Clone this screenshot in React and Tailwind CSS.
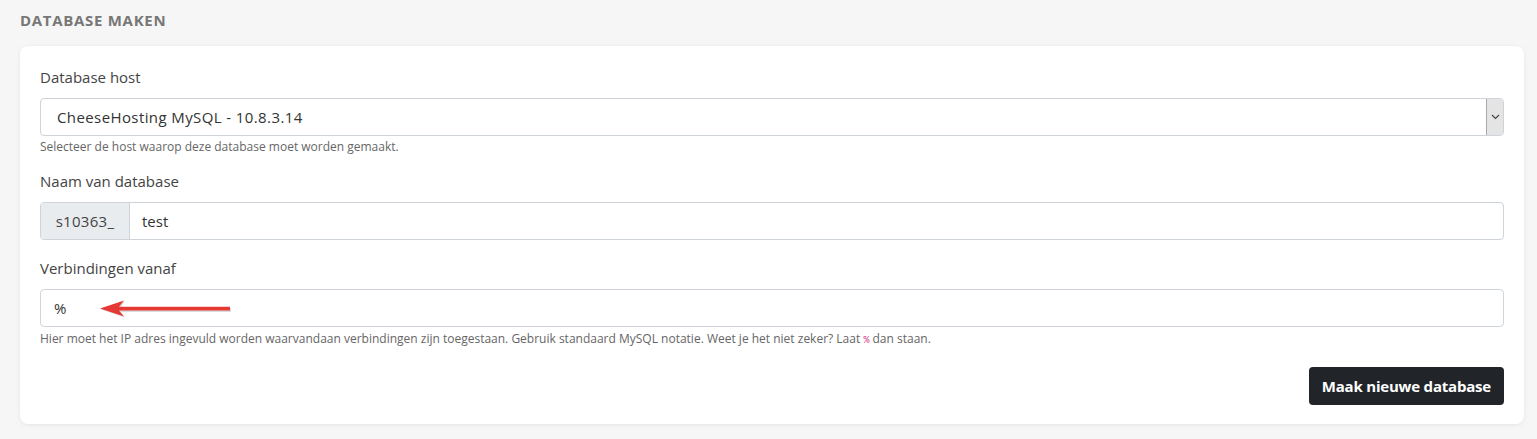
import React from "react";

const font = { fontFamily: "'Open Sans', Lato, sans-serif" };

function Field({ label, children, help, helpGap = "mt-[2px]" }) {
  return (
    <div className="flex flex-col">
      <label className="text-[15px] text-[#444] leading-[22px] mb-[10px]">{label}</label>
      {children}
      {help && <p className={`text-[12px] text-[#666] leading-[18px] ${helpGap}`}>{help}</p>}
    </div>
  );
}

export default function App() {
  return (
    <div className="min-h-[439px] bg-[#f6f6f6] px-[20px] pt-[10px] pb-[15px]" style={font}>
      <h2 className="text-[15px] font-bold text-[#777] tracking-[0.7px] leading-[20px] mb-[16px]">DATABASE MAKEN</h2>

      <div className="bg-white rounded-[8px] shadow-[0_1px_4px_rgba(0,0,0,0.08)] px-[20px] pt-[20px] pb-[19px] w-[1504px]">
        <Field label="Database host" help="Selecteer de host waarop deze database moet worden gemaakt.">
          <div className="flex h-[38px] border border-[#ced4da] rounded-[4px] overflow-hidden">
            <div className="flex-1 flex items-center pl-[16px] text-[15px] tracking-[0.4px] text-[#333]">
              CheeseHosting MySQL - 10.8.3.14
            </div>
            <div className="w-[17px] bg-[#e4e4e4] border-l border-[#aaa] flex items-center justify-center">
              <svg width="9" height="6" viewBox="0 0 9 6">
                <path d="M1 1l3.5 3.5L8 1" fill="none" stroke="#444" strokeWidth="1.2" />
              </svg>
            </div>
          </div>
        </Field>

        <div className="mt-[14px]">
          <Field label="Naam van database">
            <div className="flex h-[38px] border border-[#ced4da] rounded-[4px] overflow-hidden">
              <div className="w-[89px] bg-[#e9ecef] border-r border-[#ced4da] flex items-center justify-center text-[15px] tracking-[0.3px] text-[#444]">
                s10363_
              </div>
              <div className="flex-1 flex items-center pl-[12px] text-[15px] text-[#333]">test</div>
            </div>
          </Field>
        </div>

        <div className="mt-[17px]">
          <Field
            label="Verbindingen vanaf"
            helpGap="mt-[3px]"
            help={
              <>
                Hier moet het IP adres ingevuld worden waarvandaan verbindingen zijn toegestaan. Gebruik standaard MySQL
                notatie. Weet je het niet zeker? Laat{" "}
                <code className="text-[#d63384] text-[10px] font-mono">%</code> dan staan.
              </>
            }
          >
            <div className="relative flex h-[38px] border border-[#ced4da] rounded-[4px] items-center pl-[13px] text-[15px] text-[#333]">
              %
              <svg className="absolute left-[56px] top-[9px]" width="136" height="20" viewBox="0 0 136 20">
                <path d="M3 9.5 L27 1.5 L22 8 L133 8 L133 12 L22 12 L27 17.5 Z" fill="#888" opacity="0.3" transform="translate(1,1)" />
                <path d="M3 9.5 L27 1.5 L22 7.8 L133 7.8 L133 11.6 L22 11.6 L27 17.5 Z" fill="#e53935" />
              </svg>
            </div>
          </Field>
        </div>

        <div className="flex justify-end mt-[17px]">
          <button className="h-[38px] px-[13px] bg-[#212529] text-white text-[15px] font-bold tracking-[-0.2px] rounded-[4px]">
            Maak nieuwe database
          </button>
        </div>
      </div>
    </div>
  );
}
